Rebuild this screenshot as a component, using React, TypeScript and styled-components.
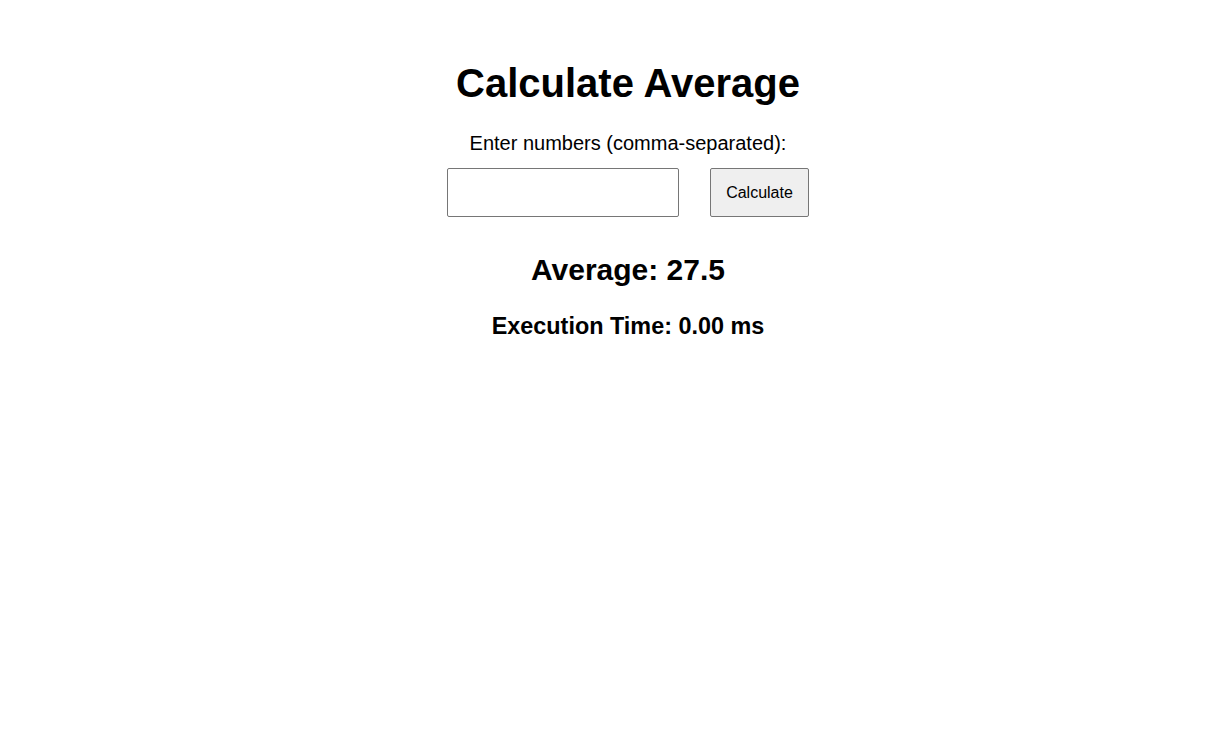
import { useState } from "react";
import styled, { createGlobalStyle } from "styled-components";

const GlobalStyle = createGlobalStyle`
  html, body {
    margin: 0;
    padding: 0;
    background: #ffffff;
    font-family: "Liberation Sans", Arial, sans-serif;
    color: #000000;
  }
`;

const Page = styled.main`
  display: flex;
  flex-direction: column;
  align-items: center;
  padding: 60px 0 0 39px;
`;

const Title = styled.h1`
  margin: 0;
  font-size: 40px;
  line-height: 46px;
  font-weight: 700;
`;

const Label = styled.label`
  margin-top: 26px;
  font-size: 20px;
  line-height: 23px;
`;

const Row = styled.div`
  display: flex;
  gap: 31px;
  margin-top: 13px;
`;

const Input = styled.input`
  box-sizing: border-box;
  width: 232px;
  height: 49px;
  padding: 0 10px;
  border: 1px solid #767676;
  border-radius: 2px;
  font-family: inherit;
  font-size: 16px;
  outline: none;
`;

const Button = styled.button`
  box-sizing: border-box;
  width: 99px;
  height: 49px;
  border: 1px solid #767676;
  border-radius: 2px;
  background: #efefef;
  font-family: inherit;
  font-size: 16px;
  color: #000000;
  cursor: pointer;
`;

const Result = styled.h2<{ $size: number; $gap: number }>`
  margin: ${({ $gap }) => $gap}px 0 0;
  font-size: ${({ $size }) => $size}px;
  line-height: ${({ $size }) => Math.round($size * 1.15)}px;
  font-weight: 700;
`;

const App = () => {
  const [value, setValue] = useState("");
  const [average, setAverage] = useState("27.5");
  const [time, setTime] = useState("0.00");

  const calculate = () => {
    const start = performance.now();
    const nums = value
      .split(",")
      .map((n) => parseFloat(n.trim()))
      .filter((n) => !isNaN(n));
    if (nums.length) {
      setAverage(String(nums.reduce((a, b) => a + b, 0) / nums.length));
    }
    setTime((performance.now() - start).toFixed(2));
  };

  return (
    <>
      <GlobalStyle />
      <Page>
        <Title>Calculate Average</Title>
        <Label htmlFor="numbers">Enter numbers (comma-separated):</Label>
        <Row>
          <Input id="numbers" value={value} onChange={(e) => setValue(e.target.value)} />
          <Button onClick={calculate}>Calculate</Button>
        </Row>
        <Result $size={30} $gap={35}>Average: {average}</Result>
        <Result $size={23.4} $gap={26}>Execution Time: {time} ms</Result>
      </Page>
    </>
  );
};

export default App;
